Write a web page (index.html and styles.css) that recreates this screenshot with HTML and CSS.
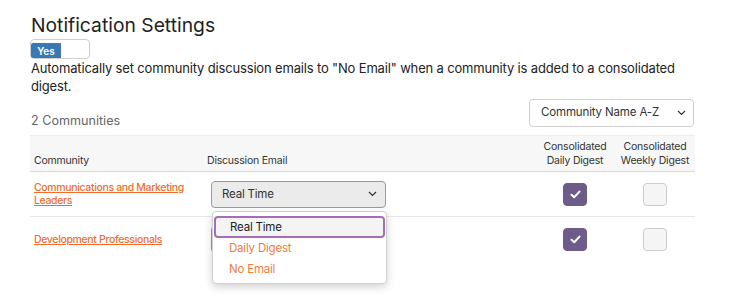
FILE: index.html
```html
<!DOCTYPE html>
<html>
<head>
<meta charset="utf-8">
<link rel="stylesheet" href="styles.css">
</head>
<body>
<div class="page">
  <h1 class="title">Notification Settings</h1>
  <div class="toggle"><span class="toggle-on">Yes</span></div>
  <p class="desc">Automatically set community discussion emails to "No Email" when a community is added to a consolidated digest.</p>
  <div class="toolbar">
    <span class="count">2 Communities</span>
    <div class="sort">
      <span>Community Name A-Z</span>
      <svg class="chev" width="9" height="6" viewBox="0 0 9 6"><polyline points="1,1 4.5,4.5 8,1" fill="none" stroke="#333" stroke-width="1.2"/></svg>
    </div>
  </div>
  <div class="table">
    <div class="row head">
      <div class="cell c-name">Community</div>
      <div class="cell c-email">Discussion Email</div>
      <div class="cell c-chk">Consolidated<br>Daily Digest</div>
      <div class="cell c-chk">Consolidated<br>Weekly Digest</div>
    </div>
    <div class="row body first">
      <div class="cell c-name"><a class="link" href="#">Communications and Marketing Leaders</a></div>
      <div class="cell c-email">
        <div class="select-wrap">
          <div class="select"><span>Real Time</span><svg class="chev" width="9" height="6" viewBox="0 0 9 6"><polyline points="1,1 4.5,4.5 8,1" fill="none" stroke="#333" stroke-width="1.2"/></svg></div>
          <div class="menu">
            <div class="opt active">Real Time</div>
            <div class="opt">Daily Digest</div>
            <div class="opt">No Email</div>
          </div>
        </div>
      </div>
      <div class="cell c-chk"><span class="box checked"><svg width="11" height="9" viewBox="0 0 11 9"><path d="M1.5 4.8 L4.2 7.3 L9.5 1.6" fill="none" stroke="#fff" stroke-width="2" stroke-linecap="round" stroke-linejoin="round"/></svg></span></div>
      <div class="cell c-chk"><span class="box"></span></div>
    </div>
    <div class="row body second">
      <div class="cell c-name"><a class="link" href="#">Development Professionals</a></div>
      <div class="cell c-email">
        <div class="select-wrap">
          <div class="select"><span>Real Time</span><svg class="chev" width="9" height="6" viewBox="0 0 9 6"><polyline points="1,1 4.5,4.5 8,1" fill="none" stroke="#333" stroke-width="1.2"/></svg></div>
        </div>
      </div>
      <div class="cell c-chk"><span class="box checked"><svg width="11" height="9" viewBox="0 0 11 9"><path d="M1.5 4.8 L4.2 7.3 L9.5 1.6" fill="none" stroke="#fff" stroke-width="2" stroke-linecap="round" stroke-linejoin="round"/></svg></span></div>
      <div class="cell c-chk"><span class="box"></span></div>
    </div>
  </div>
</div>
</body>
</html>
```

FILE: styles.css
```css
* { box-sizing: border-box; }
html, body { margin: 0; padding: 0; background: #fff; }
body { font-family: Inter, "Noto Sans", Arial, sans-serif; color: #222; min-height: 307px; }

.page { width: 695px; padding: 14px 0 40px 30px; }

.title {
  margin: 0 0 0 1px;
  font-size: 19.3px;
  line-height: 23px;
  font-weight: 400;
  color: #222;
}

.toggle {
  margin-top: 2px;
  width: 60px;
  height: 20px;
  border: 1px solid #cfcfcf;
  border-radius: 4px;
  background: #fff;
  display: flex;
  align-items: flex-end;
}
.toggle-on {
  display: flex;
  align-items: center;
  justify-content: center;
  width: 30px;
  height: 15px;
  background: #3a78b5;
  color: #fff;
  font-size: 10px;
  font-weight: 600;
  border-radius: 2px 0 0 2px;
}

.desc {
  margin: 0 0 0 1px;
  font-size: 13px;
  letter-spacing: -0.16px;
  line-height: 18px;
  color: #222;
}

.toolbar {
  margin-top: 4px;
  display: flex;
  justify-content: space-between;
  align-items: flex-end;
}
.count {
  margin-left: 1px;
  font-size: 12.6px;
  line-height: 16px;
  color: #666;
  margin-bottom: -2px;
}
.sort {
  width: 165px;
  height: 28px;
  margin-right: 1px;
  border: 1px solid #cfcfcf;
  border-radius: 4px;
  display: flex;
  align-items: center;
  justify-content: space-between;
  padding: 0 7px 0 11px;
  font-size: 11.5px;
  letter-spacing: -0.15px;
  color: #333;
}
.sort span { margin-top: -3px; }

.table { margin-top: 8px; width: 665px; }
.row { display: grid; grid-template-columns: 173px 332px 80px 80px; }
.row.head {
  height: 37px;
  background: #f7f7f7;
  border-top: 1px solid #ececec;
  border-bottom: 1px solid #d9d9d9;
  align-items: end;
  font-size: 10.5px;
  letter-spacing: -0.2px;
  line-height: 14px;
  color: #333;
}
.row.head .cell { padding-bottom: 3px; }
.row.head .c-name, .row.head .c-email { padding-left: 4px; }
.row.head .c-chk { text-align: center; }

.row.body { height: 45px; align-items: center; }
.row.body.first { border-bottom: 1px solid #e6e6e6; }
.row.body .c-name { padding-left: 4px; font-size: 10.5px; line-height: 13px; }
.row.body .c-email { padding-left: 8px; }
.row.body .c-chk { display: flex; justify-content: center; }
.row.body.first .c-email { position: relative; z-index: 5; }

.link {
  font-size: 10.5px;
  letter-spacing: -0.35px;
  line-height: 13px;
  color: #f26d2d;
  text-decoration: underline;
  font-weight: 500;
}

.select-wrap { position: relative; width: 175px; }
.select {
  height: 27px;
  border: 1px solid #9a9a9a;
  border-radius: 4px;
  background: #ebebeb;
  display: flex;
  align-items: center;
  justify-content: space-between;
  padding: 0 8px 0 10px;
  font-size: 11.5px;
  letter-spacing: -0.2px;
  color: #333;
}
.select span { margin-top: -1px; }

.menu {
  position: absolute;
  top: 30px;
  left: 1px;
  width: 175px;
  height: 73px;
  background: #fff;
  border: 1px solid #d0d0d0;
  border-radius: 4px;
  box-shadow: 0 3px 8px rgba(0,0,0,0.18);
  padding: 4px 1px 0 1px;
  z-index: 10;
}
.opt {
  height: 21px;
  line-height: 21px;
  padding-left: 15px;
  font-size: 11.5px;
  letter-spacing: -0.2px;
  color: #f47b43;
}
.opt.active {
  height: 22px;
  line-height: 18px;
  padding-left: 14px;
  border: 2px solid #a66db7;
  border-radius: 4px;
  background: #f4f4f4;
  color: #222;
}

.box {
  width: 24px;
  height: 23px;
  border-radius: 4px;
  border: 1px solid #cccccc;
  background: #f5f5f5;
  display: flex;
  align-items: center;
  justify-content: center;
}
.box.checked { background: #6d5c89; border-color: #6d5c89; }
```
